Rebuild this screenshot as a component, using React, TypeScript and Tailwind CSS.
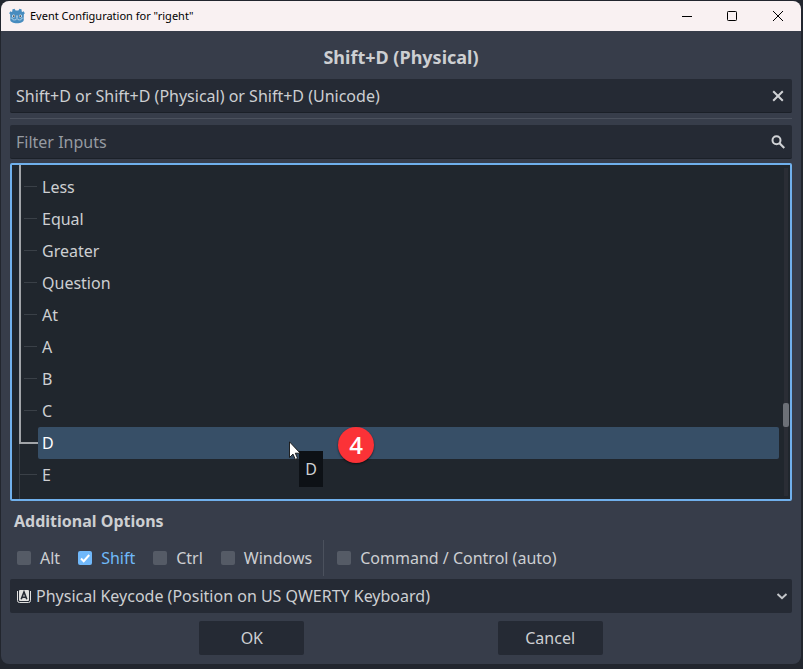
import { useState } from "react";

const KEYS = ["Less", "Equal", "Greater", "Question", "At", "A", "B", "C", "D", "E"];
const SELECTED = KEYS.indexOf("D");

function GodotIcon() {
  return (
    <svg className="h-4 w-4 shrink-0" viewBox="0 0 16 16" aria-hidden="true">
      <path
        d="M5.500.800 6.600 2.400h2.800L10.500.800l2.200.8-.1 1.700.8.600 1.200-.6L15.800 5.200l-1 1.300V11.500c0 2.500-3 3.800-6.800 3.800S1.200 14 1.200 11.500V6.500L.2 5.200 1.400 3.300l1.200.6.800-.6L3.300 1.600z"
        fill="#478cbf"
      />
      <path d="M1.400 10l2.200.3.300 1.500 2.600.2.400-1.100h2.200l.400 1.100 2.600-.2.300-1.500 2.200-.3" fill="none" stroke="#c3dcee" strokeWidth=".7" />
      <circle cx="4.600" cy="8" r="1.500" fill="#e8f2fa" />
      <circle cx="11.400" cy="8" r="1.500" fill="#e8f2fa" />
      <circle cx="4.800" cy="8.100" r=".9" fill="#414042" />
      <circle cx="11.200" cy="8.100" r=".9" fill="#414042" />
      <path d="M8 7.800v1.600" stroke="#e8f2fa" strokeWidth="1" strokeLinecap="round" />
    </svg>
  );
}

function TitleBar() {
  return (
    <header className="flex h-[30px] items-center bg-[#f9f1f2] pl-2 text-black">
      <GodotIcon />
      <h1 className="ml-[5px] flex-1 font-['Noto_Sans',sans-serif] text-[11px] leading-4">
        Event Configuration for "rigeht"
      </h1>
      <button type="button" aria-label="Minimize" className="flex h-full w-[45px] items-center justify-center">
        <svg className="h-[10px] w-[10px]" viewBox="0 0 10 10"><path d="M0 5.500h10" stroke="#000" /></svg>
      </button>
      <button type="button" aria-label="Maximize" className="flex h-full w-[45px] items-center justify-center">
        <svg className="h-[10px] w-[10px]" viewBox="0 0 10 10"><rect x=".5" y=".5" width="9" height="9" rx=".8" fill="none" stroke="#000" /></svg>
      </button>
      <button type="button" aria-label="Close" className="flex h-full w-[47px] items-center justify-center">
        <svg className="h-[10px] w-[10px]" viewBox="0 0 10 10"><path d="M0 0l10 10M10 0L0 10" stroke="#000" /></svg>
      </button>
    </header>
  );
}

function Branch({ index }: { index: number }) {
  if (index === SELECTED) {
    return (
      <span className="ml-[7px] flex w-[19px] shrink-0 flex-col">
        <span className="h-[17px] border-b-2 border-l-2 border-[#a2a5a9]" />
        <span className="flex-1 border-l border-[#3a4047]" />
      </span>
    );
  }
  if (index > SELECTED) {
    return (
      <span className="ml-[7px] flex w-[18px] shrink-0 flex-col border-l border-[#3a4047]">
        <span className="h-4 border-b border-[#3a4047]" />
      </span>
    );
  }
  return (
    <span className="ml-[7px] flex w-[18px] shrink-0 flex-col border-l-2 border-[#a2a5a9] pl-[3px]">
      <span className="h-4 border-b border-[#3a4047]" />
    </span>
  );
}

function KeyTree() {
  return (
    <div className="mt-1 flex rounded-[2px] border-2 border-[#70b0ec] bg-[#20262d]">
      <div className="min-w-0 flex-1">
        <div className="ml-[7px] h-[6px] border-l-2 border-[#a2a5a9]" />
        <ul role="listbox" aria-label="Inputs">
          {KEYS.map((name, i) => (
            <li key={name} role="option" aria-selected={i === SELECTED} className="relative flex h-8">
              <Branch index={i} />
              {i === SELECTED ? (
                <span className="flex-1 rounded-[2px] bg-[#374f67] pl-1 leading-8 text-white">{name}</span>
              ) : (
                <span className="ml-px flex-1 pl-1 leading-8">{name}</span>
              )}
              {i === SELECTED && <Pointer />}
            </li>
          ))}
        </ul>
        <div className="ml-[7px] h-2 border-l border-[#3a4047]" />
      </div>
      <div className="ml-1 mr-px flex w-[6px] flex-col items-center py-[3px]">
        <div className="h-[235px] w-1 bg-[#2a2d35]" />
        <div className="h-6 w-[6px] rounded-[2px] bg-[#6c7077]" />
        <div className="w-1 flex-1 bg-[#2a2d35]" />
      </div>
    </div>
  );
}

function Pointer() {
  return (
    <>
      <div role="tooltip" className="absolute left-[287px] top-6 z-10 h-9 w-6 bg-[#0d1116] text-center leading-9 text-[#cdcfd2]">
        D
      </div>
      <svg className="absolute left-[277px] top-[14px] z-20 h-5 w-3" viewBox="0 0 12 20" aria-hidden="true">
        <path d="M.5.800v15.700l3.500-3.400 2.300 5.300 2.300-1-2.300-5.200h4.900z" fill="#fff" stroke="#111" strokeWidth=".9" />
      </svg>
      <div className="absolute left-[326px] top-0 z-10 h-9 w-9 rounded-full bg-[#fb3237] text-center font-['Open_Sans','Noto_Sans',sans-serif] text-[24px] font-semibold leading-9 text-white shadow-[0_1px_2px_rgba(0,0,0,0.6)]">
        4
      </div>
    </>
  );
}

function Modifier({ label, initial = false }: { label: string; initial?: boolean }) {
  const [on, setOn] = useState(initial);
  return (
    <label className={on ? "flex items-center gap-[9px] text-[#70bafa]" : "flex items-center gap-[9px]"}>
      <span className="grid h-[14px] w-[14px]">
        <input
          type="checkbox"
          checked={on}
          onChange={(e) => setOn(e.target.checked)}
          className="col-start-1 row-start-1 h-[14px] w-[14px] appearance-none rounded-[2px] bg-[#555b66] checked:bg-[#70b8fa]"
        />
        {on && (
          <svg className="pointer-events-none col-start-1 row-start-1 h-[14px] w-[14px]" viewBox="0 0 14 14">
            <path d="M3 7.500l2.700 2.700L11.200 4" fill="none" stroke="#fff" strokeWidth="2" />
          </svg>
        )}
      </span>
      {label}
    </label>
  );
}

export default function App() {
  const [keys, setKeys] = useState("Shift+D or Shift+D (Physical) or Shift+D (Unicode)");
  const [filter, setFilter] = useState("");

  return (
    <div className="min-h-screen bg-[#22262e] py-px pl-px pr-[2px] font-['Noto_Sans',sans-serif] text-[16px] text-[#cdcfd2]">
      <main className="overflow-hidden rounded-[8px] bg-[#373d4a]">
        <TitleBar />
        <div className="px-[9px] pb-[9px]">
          <h2 className="pb-[10px] pt-[14px] text-center text-[18px] font-bold leading-6">Shift+D (Physical)</h2>

          <div className="flex h-[34px] items-center rounded-[2px] border-b border-[#1b2028] bg-[#252a34] pl-[6px] pr-2">
            <input
              aria-label="Listening for input"
              value={keys}
              onChange={(e) => setKeys(e.target.value)}
              className="h-full min-w-0 flex-1 bg-transparent outline-none"
            />
            <button type="button" aria-label="Clear" onClick={() => setKeys("")}>
              <svg className="h-3 w-3" viewBox="0 0 12 12">
                <path d="M1.200 1.200l9.600 9.600M10.800 1.200l-9.600 9.600" stroke="#d0d2d5" strokeWidth="2" />
              </svg>
            </button>
          </div>

          <hr className="mb-[6px] mt-[5px] border-[#4b515d]" />

          <div className="flex h-[34px] items-center rounded-[2px] border-b border-[#1b2028] bg-[#252a34] pl-[6px] pr-[7px]">
            <input
              aria-label="Filter Inputs"
              placeholder="Filter Inputs"
              value={filter}
              onChange={(e) => setFilter(e.target.value)}
              className="h-full min-w-0 flex-1 bg-transparent outline-none placeholder:text-[#969aa1]"
            />
            <svg className="h-[14px] w-[14px]" viewBox="0 0 14 14" aria-hidden="true">
              <circle cx="5.500" cy="5.200" r="4" fill="none" stroke="#d0d2d5" strokeWidth="2" />
              <path d="M8.300 8l5 5" stroke="#d0d2d5" strokeWidth="2.200" />
            </svg>
          </div>

          <KeyTree />

          <h2 className="mt-2 pl-1 font-bold leading-6">Additional Options</h2>

          <div className="mt-[7px] flex h-9 items-center pl-[7px]">
            <div className="flex items-center gap-[18px]">
              <Modifier label="Alt" />
              <Modifier label="Shift" initial />
              <Modifier label="Ctrl" />
              <Modifier label="Windows" />
            </div>
            <div className="ml-[11px] mr-[13px] h-full border-l border-[#4b515d]" />
            <Modifier label="Command / Control (auto)" />
          </div>

          <div className="mt-[3px] flex h-[34px] items-center rounded-[2px] bg-[#252a34] pl-[7px] pr-1">
            <svg className="h-[14px] w-[14px] shrink-0" viewBox="0 0 14 14" aria-hidden="true">
              <path d="M.5 2v9.500a2 2 0 0 0 2 2h9a2 2 0 0 0 2-2V2" fill="none" stroke="#e0e0e0" />
              <rect x="2" y="1" width="10" height="11" rx="1" fill="#e0e0e0" />
              <path d="M4.200 10.300L7 3l2.800 7.300M5.200 8.300h3.600" fill="none" stroke="#252a34" strokeWidth="1.600" />
            </svg>
            <select aria-label="Keycode type" className="ml-[5px] h-full min-w-0 flex-1 appearance-none bg-transparent outline-none">
              <option>Physical Keycode (Position on US QWERTY Keyboard)</option>
            </select>
            <svg className="h-3 w-3 shrink-0" viewBox="0 0 12 12" aria-hidden="true">
              <path d="M1.500 4L6 8.200 10.500 4" fill="none" stroke="#c4c6ca" strokeWidth="2" />
            </svg>
          </div>

          <div className="-mx-1 mt-2 flex justify-evenly">
            <button type="button" className="h-[34px] w-[105px] rounded-[2px] bg-[#252a34]">OK</button>
            <button type="button" className="h-[34px] w-[105px] rounded-[2px] bg-[#252a34]">Cancel</button>
          </div>
        </div>
      </main>
    </div>
  );
}
